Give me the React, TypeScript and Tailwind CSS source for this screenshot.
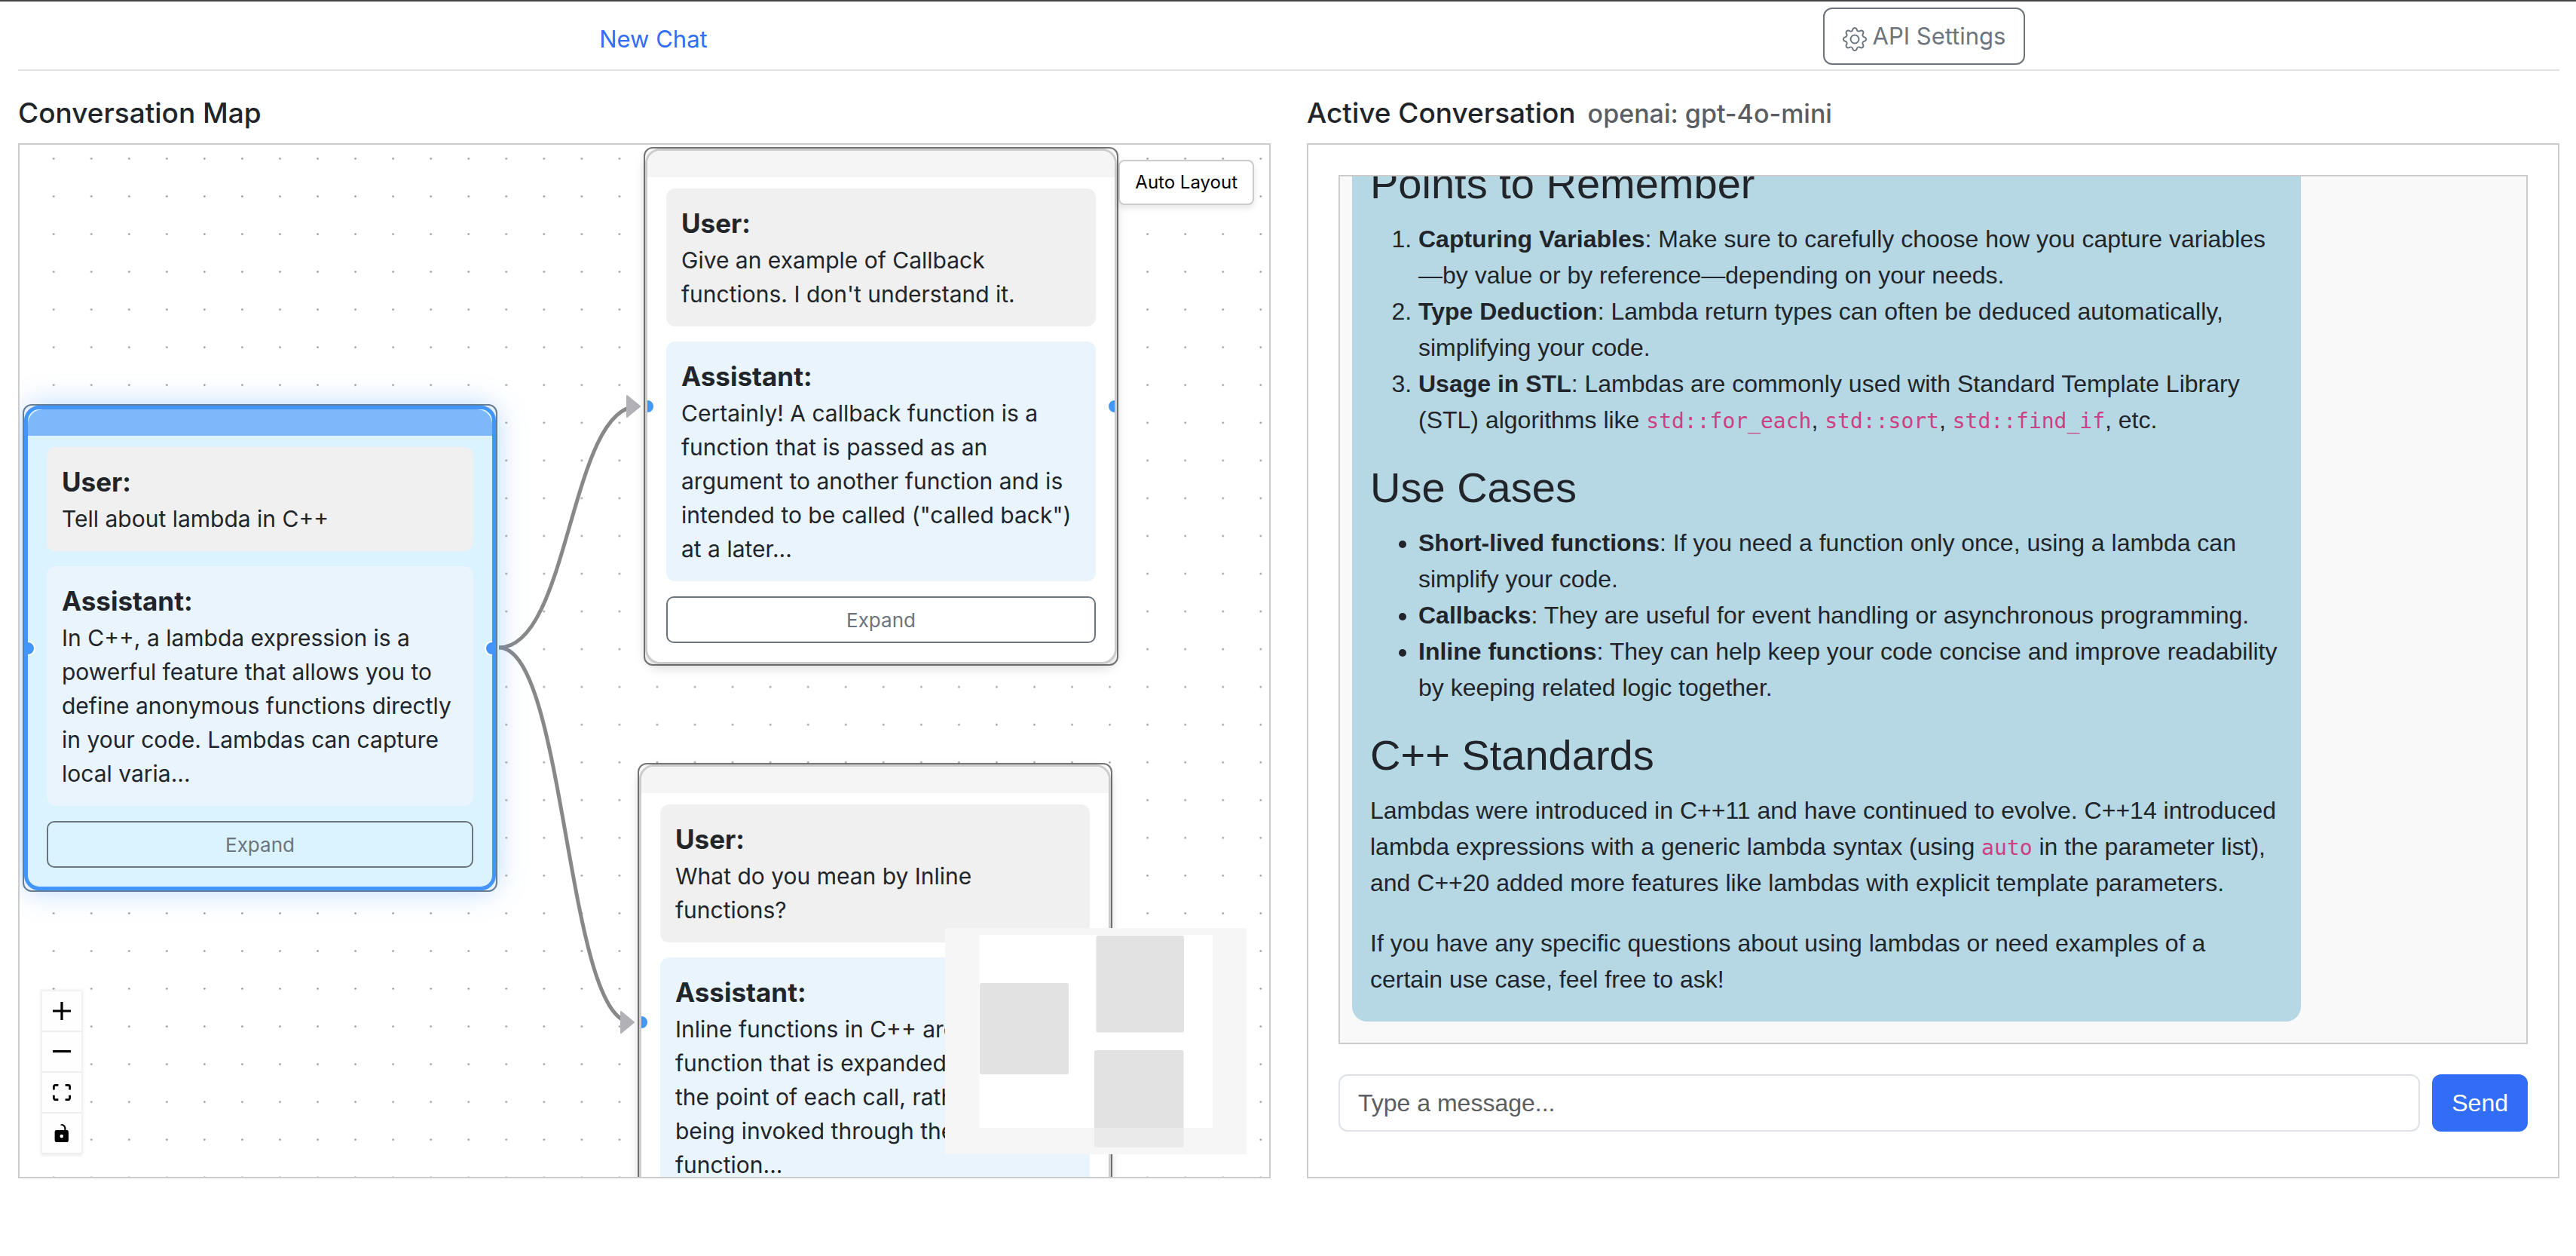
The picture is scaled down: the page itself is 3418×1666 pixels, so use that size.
import type { ReactNode } from "react";
import { BsGear } from "react-icons/bs";

type ChatNode = {
  id: string;
  place: string;
  active?: boolean;
  user: string;
  assistant: string;
};

const nodes: ChatNode[] = [
  {
    id: "lambda",
    place: "left-[4px] top-[344px]",
    active: true,
    user: "Tell about lambda in C++",
    assistant:
      "In C++, a lambda expression is a powerful feature that allows you to define anonymous functions directly in your code. Lambdas can capture local varia...",
  },
  {
    id: "callback",
    place: "left-[828px] top-[3px]",
    user: "Give an example of Callback functions. I don't understand it.",
    assistant:
      'Certainly! A callback function is a function that is passed as an argument to another function and is intended to be called ("called back") at a later...',
  },
  {
    id: "inline",
    place: "left-[820px] top-[820px]",
    user: "What do you mean by Inline functions?",
    assistant:
      "Inline functions in C++ are a type of function that is expanded in line at the point of each call, rather than being invoked through the usual function...",
  },
];

function Handle({ side }: { side: string }) {
  return (
    <span
      className={`absolute top-1/2 size-5 -translate-y-1/2 rounded-full border-2 border-white bg-[#4295fa] ${side}`}
    />
  );
}

function NodeCard({ node }: { node: ChatNode }) {
  const outline = node.active ? "border-[#6c7a89]" : "border-[#777777]";
  const body = node.active
    ? "border-5 border-[#4295fa] bg-[#daf3ff] shadow-[0_0_38px_rgba(66,149,250,0.4)]"
    : "border-3 border-[#cccccc] bg-white shadow-[0_5px_15px_rgba(0,0,0,0.15)]";
  const band = node.active ? "rounded-t-[20px] bg-[#7eb8fa]" : "bg-[#f5f5f5]";
  return (
    <article className={`absolute w-[630px] rounded-[12px] border-2 ${outline} ${node.place}`}>
      <div className={`relative overflow-hidden rounded-[20px] ${body}`}>
        <div className={`h-[35px] ${band}`} />
        <div className="flex flex-col gap-5 px-[25px] pt-[15px] pb-[25px]">
          <section className="rounded-[12px] bg-[#f0f0f0] p-5">
            <h3 className="text-[35px] leading-[53px] font-bold">User:</h3>
            <p className="text-[30px] leading-[45px]">{node.user}</p>
          </section>
          <section className="rounded-[12px] bg-[#e9f4fd] p-5">
            <h3 className="text-[35px] leading-[53px] font-bold">Assistant:</h3>
            <p className="text-[30px] leading-[45px]">{node.assistant}</p>
          </section>
          <button
            type="button"
            className="h-[62px] rounded-[10px] border-2 border-[#6c757d] text-[26px] text-[#6c757d]"
          >
            Expand
          </button>
        </div>
        <Handle side="-left-[10px]" />
        <Handle side="-right-[10px]" />
      </div>
    </article>
  );
}

function Edges() {
  return (
    <svg className="absolute inset-0 size-full" aria-hidden="true">
      <defs>
        <pattern id="dots" x="20.2" y="-6.6" width="50.05" height="50.05" patternUnits="userSpaceOnUse">
          <circle cx="25" cy="25" r="1.3" fill="#91919a" />
        </pattern>
      </defs>
      <rect width="100%" height="100%" fill="url(#dots)" />
      <g fill="none" stroke="#888888" strokeWidth="5">
        <path d="M636 667C730 667 730 347 820 347" />
        <path d="M636 667C725 667 725 1164 812 1164" />
      </g>
      <g fill="#b1b1b7" stroke="#b1b1b7" strokeWidth="2" strokeLinejoin="round">
        <path d="M806 333L823 347L806 361Z" />
        <path d="M798 1150L815 1164L798 1178Z" />
      </g>
    </svg>
  );
}

const controls = [
  {
    label: "Zoom in",
    box: "0 0 32 32",
    d: "M32 18.133H18.133V32h-4.266V18.133H0v-4.266h13.867V0h4.266v13.867H32z",
  },
  { label: "Zoom out", box: "0 0 32 5", d: "M0 0h32v4.2H0z" },
  {
    label: "Fit view",
    box: "0 0 32 30",
    d: "M3.692 4.63c0-.53.4-.938.939-.938h5.215V0H4.708C2.13 0 0 2.054 0 4.63v5.216h3.692V4.631zM27.354 0h-5.2v3.692h5.17c.53 0 .984.4.984.939v5.215H32V4.631A4.624 4.624 0 0027.354 0zm.954 24.83c0 .532-.4.94-.939.94h-5.215v3.768h5.215c2.577 0 4.631-2.13 4.631-4.707v-5.139h-3.692v5.139zm-23.677.94a.919.919 0 01-.939-.94v-5.138H0v5.139c0 2.577 2.13 4.707 4.708 4.707h5.138V25.77H4.631z",
  },
  {
    label: "Toggle lock",
    box: "0 0 25 32",
    d: "M21.333 10.667H19.81V7.619C19.81 3.429 16.38 0 12.19 0c-4.114 1.828-1.37 2.133.305 2.438 1.676.305 4.42 2.59 4.42 5.181v3.048H3.047A3.056 3.056 0 000 13.714v15.238A3.056 3.056 0 003.048 32h18.285a3.056 3.056 0 003.048-3.048V13.714a3.056 3.056 0 00-3.048-3.047zM12.19 24.533a3.056 3.056 0 01-3.047-3.047 3.056 3.056 0 013.047-3.048 3.056 3.056 0 013.048 3.048 3.056 3.056 0 01-3.048 3.047z",
  },
];

function Controls() {
  return (
    <div className="absolute bottom-[30px] left-[30px] flex flex-col shadow-[0_0_4px_2px_rgba(0,0,0,0.08)]">
      {controls.map((c) => (
        <button
          key={c.label}
          type="button"
          aria-label={c.label}
          className="flex h-[54px] w-[52px] items-center justify-center border-b-2 border-[#eeeeee] bg-[#fefefe]"
        >
          <svg viewBox={c.box} className="max-h-6 w-6" aria-hidden="true">
            <path d={c.d} />
          </svg>
        </button>
      ))}
    </div>
  );
}

function MiniMap() {
  return (
    <svg
      viewBox="0 0 400 300"
      className="absolute right-[30px] bottom-[30px] h-[300px] w-[400px] bg-white"
      role="img"
      aria-label="Mini map"
    >
      <g fill="#e2e2e2">
        <rect x="46" y="73" width="118" height="121" rx="2.5" />
        <rect x="200.5" y="10" width="116.5" height="128.5" rx="2.5" />
        <rect x="198" y="162" width="118.5" height="129" rx="2.5" />
      </g>
      <path
        d="M0 0H400V300H0ZM45.5 9V265H355V9Z"
        fill="#f0f0f0"
        fillOpacity="0.6"
        fillRule="evenodd"
      />
    </svg>
  );
}

function Code({ children }: { children: ReactNode }) {
  return (
    <code className="font-['DejaVu_Sans_Mono',monospace] text-[28px] leading-none text-[#cc4084]">
      {children}
    </code>
  );
}

function Title({ children }: { children: ReactNode }) {
  return <h3 className="mb-4 text-[56px] leading-[67px]">{children}</h3>;
}

function AssistantMessage() {
  return (
    <div className="ml-4 w-4/5 shrink-0 rounded-[20px] bg-[#b6d8e4] px-6 pt-6 pb-8">
      <Title>Points to Remember</Title>
      <ol className="mb-8 list-decimal pl-16">
        <li>
          <strong>Capturing Variables</strong>: Make sure to carefully choose how you capture variables—by
          value or by reference—depending on your needs.
        </li>
        <li>
          <strong>Type Deduction</strong>: Lambda return types can often be deduced automatically,
          simplifying your code.
        </li>
        <li>
          <strong>Usage in STL</strong>: Lambdas are commonly used with Standard Template Library (STL)
          algorithms like <Code>std::for_each</Code>, <Code>std::sort</Code>, <Code>std::find_if</Code>,
          etc.
        </li>
      </ol>
      <Title>Use Cases</Title>
      <ul className="mb-8 list-disc pl-16">
        <li>
          <strong>Short-lived functions</strong>: If you need a function only once, using a lambda can
          simplify your code.
        </li>
        <li>
          <strong>Callbacks</strong>: They are useful for event handling or asynchronous programming.
        </li>
        <li>
          <strong>Inline functions</strong>: They can help keep your code concise and improve readability
          by keeping related logic together.
        </li>
      </ul>
      <Title>C++ Standards</Title>
      <p className="mb-8">
        Lambdas were introduced in C++11 and have continued to evolve. C++14 introduced lambda expressions
        with a generic lambda syntax (using <Code>auto</Code> in the parameter list), and C++20 added more
        features like lambdas with explicit template parameters.
      </p>
      <p>
        If you have any specific questions about using lambdas or need examples of a certain use case, feel
        free to ask!
      </p>
    </div>
  );
}

export default function App() {
  return (
    <div className="flex h-screen flex-col border-t-2 border-[#444444] bg-white pr-[22px] pb-[103px] pl-6 font-[Inter,sans-serif] text-[#212529]">
      <header className="grid h-[92px] shrink-0 grid-cols-2 border-b-2 border-[#dee2e6] pt-2">
        <div className="flex justify-center pt-[18px]">
          <a href="#new" className="text-[31px] leading-[48px] text-[#316df6]">
            New Chat
          </a>
        </div>
        <div className="flex justify-center">
          <button
            type="button"
            className="flex h-[76px] items-center gap-2 rounded-[12px] border-2 border-[#6c757d] px-6 text-[31px] text-[#6c757d]"
          >
            <BsGear className="mt-2 size-8" aria-hidden="true" />
            API Settings
          </button>
        </div>
      </header>

      <main className="mt-8 grid min-h-0 flex-1 grid-cols-2 gap-12">
        <section className="flex min-h-0 min-w-0 flex-col">
          <h2 className="mb-4 h-12 text-[37px] leading-[48px] font-medium">Conversation Map</h2>
          <div className="relative min-h-0 flex-1 overflow-hidden border-2 border-[#cccccc]">
            <Edges />
            {nodes.map((n) => (
              <NodeCard key={n.id} node={n} />
            ))}
            <button
              type="button"
              className="absolute top-5 right-5 h-[60px] rounded-[8px] border-2 border-[#cccccc] bg-white px-5 text-[24px] text-black shadow-[0_4px_8px_rgba(0,0,0,0.1)]"
            >
              Auto Layout
            </button>
            <Controls />
            <MiniMap />
          </div>
        </section>

        <section className="flex min-h-0 min-w-0 flex-col">
          <h2 className="mb-4 flex h-12 items-baseline gap-4 text-[37px] leading-[48px] font-medium">
            Active Conversation
            <span className="text-[34px] text-[#5a5d61]">openai: gpt-4o-mini</span>
          </h2>
          <div className="flex min-h-0 flex-1 flex-col gap-10 border-2 border-[#cccccc] px-10 pt-10 pb-[60px] font-['Liberation_Sans',Arial,sans-serif] text-[32px] leading-[48px]">
            <div className="flex min-h-0 flex-1 flex-col justify-end overflow-hidden border-2 border-[#cccccc] bg-[#f9f9f9] pb-7">
              <AssistantMessage />
            </div>
            <form className="flex h-[76px] gap-4">
              <input
                type="text"
                aria-label="Message"
                placeholder="Type a message..."
                className="min-w-0 flex-1 rounded-[12px] border-2 border-[#dee2e6] bg-white px-6 placeholder:text-[#5a5d61]"
              />
              <button type="button" className="rounded-[12px] bg-[#316df6] px-[26px] text-white">
                Send
              </button>
            </form>
          </div>
        </section>
      </main>
    </div>
  );
}
